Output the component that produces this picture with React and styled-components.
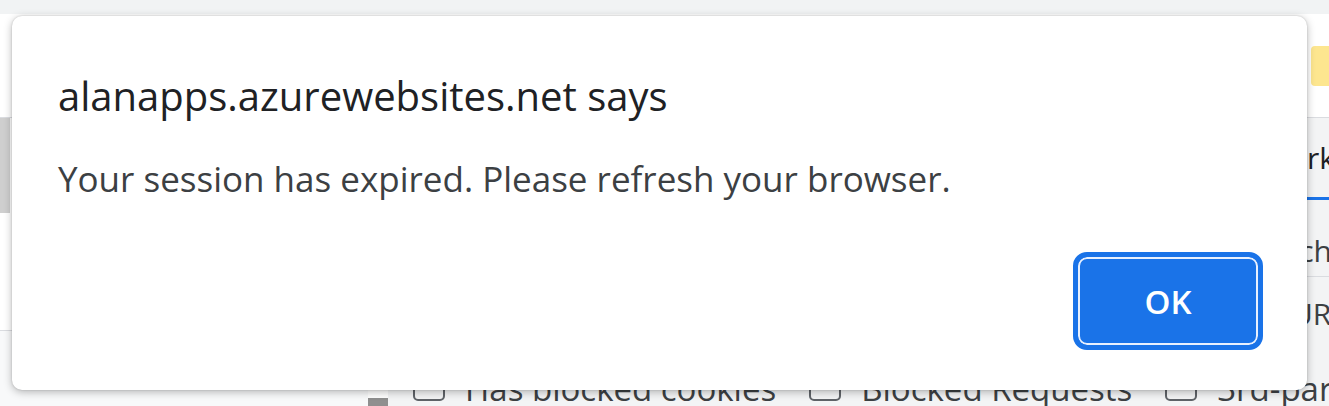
import styled, { createGlobalStyle } from "styled-components";

const GlobalStyle = createGlobalStyle`
  html, body {
    margin: 0;
    padding: 0;
    background: #fff;
  }
  body {
    font-family: "Open Sans", "Noto Sans", Arial, sans-serif;
  }
`;

const App = () => {
  const filters = ["Has blocked cookies", "Blocked Requests", "3rd-party requests"];

  return (
    <>
      <GlobalStyle />
      <Page>
        <TopStrip />
        <Toolbar>
          <Chip />
        </Toolbar>
        <Panel>
          <Sidebar>
            <SidebarTop>
              <ScrollThumb />
            </SidebarTop>
            <SidebarFooter />
          </Sidebar>
          <Splitter>
            <Grip />
          </Splitter>
          <Main>
            <TabBar>
              <Tab active>Network</Tab>
            </TabBar>
            <SearchRow>
              <RowText trim={-3}>Search</RowText>
            </SearchRow>
            <UrlRow>
              <RowText trim={-18}>URL</RowText>
            </UrlRow>
            <FilterRow>
              {filters.map((f) => (
                <Filter key={f}>
                  <Box />
                  <span>{f}</span>
                </Filter>
              ))}
            </FilterRow>
          </Main>
        </Panel>

        <Dialog role="alertdialog">
          <Title>alanapps.azurewebsites.net says</Title>
          <Message>Your session has expired. Please refresh your browser.</Message>
          <Actions>
            <OkButton>OK</OkButton>
          </Actions>
        </Dialog>
      </Page>
    </>
  );
};

const Page = styled.div`
  position: relative;
  width: 1329px;
  height: 406px;
  overflow: hidden;
  display: flex;
  flex-direction: column;
  background: #fff;
  color: #3c4043;
`;

const TopStrip = styled.div`
  height: 14px;
  flex-shrink: 0;
  background: #f1f3f4;
`;

const Toolbar = styled.div`
  height: 104px;
  flex-shrink: 0;
  box-sizing: border-box;
  padding-top: 32px;
  border-bottom: 1px solid #dadce0;
  display: flex;
  justify-content: flex-end;
  align-items: flex-start;
`;

const Chip = styled.div`
  width: 40px;
  height: 40px;
  margin-right: -22px;
  border-radius: 4px;
  background: #fde68f;
`;

const Panel = styled.div`
  flex: 1;
  display: flex;
  min-height: 0;
`;

const Sidebar = styled.div`
  width: 368px;
  flex-shrink: 0;
  display: flex;
  flex-direction: column;
`;

const SidebarTop = styled.div`
  height: 212px;
`;

const ScrollThumb = styled.div`
  width: 10px;
  height: 95px;
  background: #cfcfcf;
`;

const SidebarFooter = styled.div`
  flex: 1;
  border-top: 1px solid #dadce0;
  background: #f8f9fa;
`;

const Splitter = styled.div`
  width: 20px;
  flex-shrink: 0;
  display: flex;
  flex-direction: column;
  justify-content: flex-end;
`;

const Grip = styled.div`
  height: 8px;
  background: #8f8f8f;
`;

const Main = styled.div`
  flex: 1;
  min-width: 0;
  display: flex;
  flex-direction: column;
  background: #f3f4f5;
  font-size: 30px;
  line-height: 36px;
  white-space: nowrap;
`;

const TabBar = styled.div`
  height: 82px;
  display: flex;
  justify-content: flex-end;
`;

const Tab = styled.div`
  box-sizing: border-box;
  padding: 22px 16px 0;
  margin-right: -22px;
  color: #202124;
  border-bottom: 3px solid ${(p) => (p.active ? "#1a73e8" : "transparent")};
`;

const SearchRow = styled.div`
  height: 77px;
  box-sizing: border-box;
  padding-top: 33px;
  border-bottom: 1px solid #dadce0;
  display: flex;
  justify-content: flex-end;
`;

const UrlRow = styled.div`
  height: 80px;
  box-sizing: border-box;
  padding-top: 19px;
  display: flex;
  justify-content: flex-end;
`;

const RowText = styled.span`
  margin-right: ${(p) => p.trim}px;
  color: #3c4043;
`;

const FilterRow = styled.div`
  margin-top: auto;
  display: flex;
  gap: 33px;
  padding: 0 0 0 25px;
  margin-bottom: -3px;
  font-size: 33px;
  line-height: 40px;
`;

const Filter = styled.div`
  display: flex;
  align-items: flex-end;
  gap: 20px;
  color: #3c4043;
`;

const Box = styled.div`
  width: 32px;
  height: 28px;
  box-sizing: border-box;
  margin-bottom: 8px;
  border: 2px solid #5f6368;
  border-radius: 5px;
`;

const Dialog = styled.div`
  position: absolute;
  left: 12px;
  top: 16px;
  width: 1295px;
  height: 374px;
  box-sizing: border-box;
  padding: 56px 44px 40px 46px;
  display: flex;
  flex-direction: column;
  background: #fff;
  border-radius: 10px;
  box-shadow: 0 2px 8px rgba(0, 0, 0, 0.28), 0 0 2px rgba(0, 0, 0, 0.18);
`;

const Title = styled.div`
  font-size: 40px;
  line-height: 48px;
  color: #202124;
`;

const Message = styled.div`
  margin-top: 39px;
  font-size: 35px;
  line-height: 40px;
  color: #3c4043;
`;

const Actions = styled.div`
  margin-top: auto;
  display: flex;
  justify-content: flex-end;
`;

const OkButton = styled.button`
  width: 190px;
  height: 98px;
  box-sizing: border-box;
  border: 5px solid #1a73e8;
  border-radius: 14px;
  background: #1a73e8;
  box-shadow: inset 0 0 0 2px #e8f0fe;
  color: #fff;
  font-family: inherit;
  font-size: 33px;
  font-weight: 600;
  cursor: pointer;
`;

export default App;
